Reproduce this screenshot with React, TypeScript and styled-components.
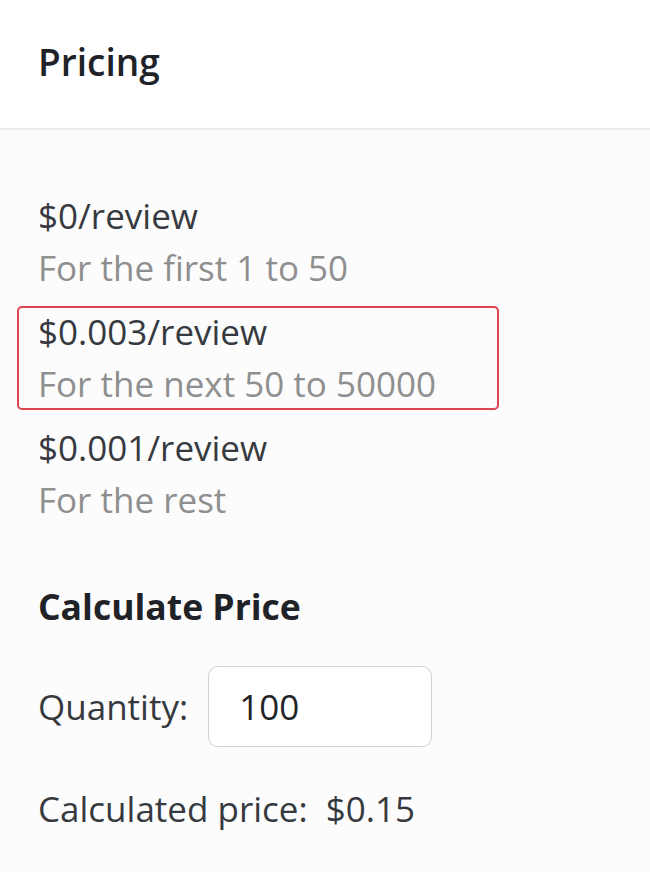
import styled, { createGlobalStyle } from 'styled-components'

const GlobalStyle = createGlobalStyle`
  html, body {
    margin: 0;
    padding: 0;
    background: #fcfcfd;
  }
  body {
    font-family: "Open Sans", "Noto Sans", sans-serif;
  }
`

interface Tier {
  price: string
  note: string
  highlight?: boolean
}

const tiers: Tier[] = [
  { price: '$0/review', note: 'For the first 1 to 50' },
  { price: '$0.003/review', note: 'For the next 50 to 50000', highlight: true },
  { price: '$0.001/review', note: 'For the rest' },
]

const App = () => {
  return (
    <Page>
      <GlobalStyle />
      <Header>
        <Title>Pricing</Title>
      </Header>
      <Body>
        <TierList>
          {tiers.map((t) => (
            <TierItem key={t.price} $highlight={t.highlight}>
              <Price>{t.price}</Price>
              <Note>{t.note}</Note>
            </TierItem>
          ))}
        </TierList>
        <SubTitle>Calculate Price</SubTitle>
        <QuantityRow>
          <Label>Quantity:</Label>
          <QuantityInput defaultValue="100" />
        </QuantityRow>
        <ResultRow>
          Calculated price:&nbsp;&nbsp;$0.15
        </ResultRow>
      </Body>
    </Page>
  )
}

export default App

const Page = styled.div`
  width: 650px;
  min-height: 872px;
  background: #fcfcfd;
`

const Header = styled.div`
  height: 130px;
  box-sizing: border-box;
  padding: 0 0 6px 38px;
  display: flex;
  align-items: center;
  background: #ffffff;
  border-bottom: 2px solid #ebebeb;
`

const Title = styled.h1`
  margin: 0;
  font-size: 37px;
  font-weight: 600;
  color: #1f2328;
`

const Body = styled.div`
  padding: 60px 38px 0;
`

const TierList = styled.div`
  display: flex;
  flex-direction: column;
  gap: 12px;
`

const TierItem = styled.div<{ $highlight?: boolean }>`
  width: 482px;
  height: 104px;
  box-sizing: border-box;
  margin-left: -21px;
  padding-left: 21px;
  border-radius: 5px;
  box-shadow: ${(p) => (p.$highlight ? 'inset 0 0 0 2px #e0444e' : 'none')};
  display: flex;
  flex-direction: column;
`

const Price = styled.div`
  font-size: 35px;
  line-height: 52px;
  color: #363a3f;
`

const Note = styled.div`
  font-size: 35px;
  line-height: 52px;
  color: #8f8f8f;
`

const SubTitle = styled.h2`
  margin: 54px 0 0;
  font-size: 35.5px;
  font-weight: 700;
  line-height: 52px;
  color: #1f2328;
`

const QuantityRow = styled.div`
  margin-top: 34px;
  display: flex;
  align-items: center;
  gap: 20px;
`

const Label = styled.span`
  font-size: 35px;
  color: #363a3f;
`

const QuantityInput = styled.input`
  width: 224px;
  height: 81px;
  box-sizing: border-box;
  border: 1.5px solid #d0d0d0;
  border-radius: 10px;
  padding: 0 0 0 30px;
  background: #fff;
  font-family: inherit;
  font-size: 35px;
  color: #1f2328;
  outline: none;
`

const ResultRow = styled.div`
  margin-top: 36px;
  font-size: 35px;
  line-height: 52px;
  color: #363a3f;
`
